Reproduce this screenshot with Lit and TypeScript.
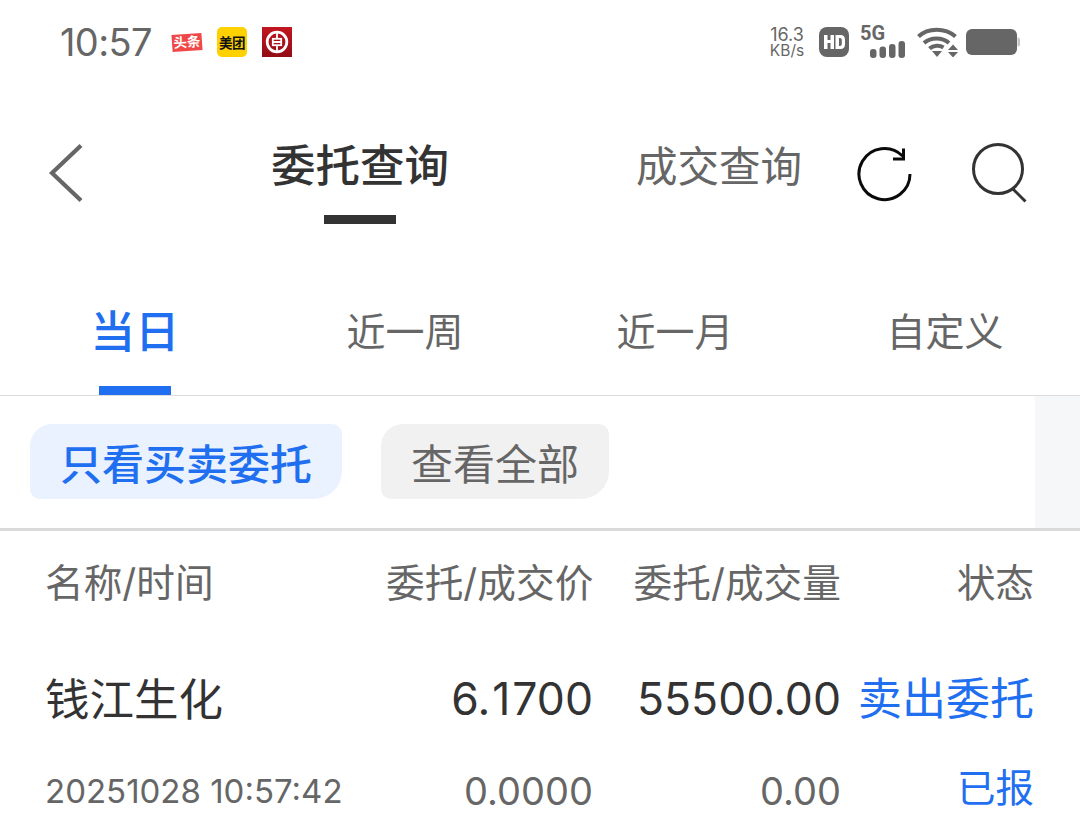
import { LitElement, html, css } from "lit";
import { customElement } from "lit/decorators.js";

@customElement("app-root")
export class AppRoot extends LitElement {
  static styles = css`
    :host { display: block; width: 1080px; height: 830px; overflow: hidden; background: #fff;
      font-family: "Inter", "Noto Sans CJK SC", sans-serif; color: #333; }
    svg { display: block; flex: none; }
    .status { height: 84px; display: flex; align-items: center; padding: 0 60px; }
    .time { font-size: 38px; color: #666; width: 112px; letter-spacing: -0.6px; }
    .logos { display: flex; gap: 15px; align-items: center; }
    .logo { width: 30px; height: 30px; display: flex; align-items: center; justify-content: center; }
    .toutiao { background: #f04848; height: 17px; color: #fff; font-size: 13.5px; font-weight: 700; transform: rotate(-4deg); white-space: nowrap; line-height: 1; overflow: hidden; }
    .meituan { background: #ffd100; border-radius: 5px; color: #111; font-size: 13.5px; font-weight: 700; white-space: nowrap; letter-spacing: -0.5px; }
    .boc { background: linear-gradient(#c1171f, #930d15); }
    .sysicons { margin-left: auto; display: flex; align-items: center; }
    .speed { width: 36px; margin: 2px 14px 0 0; text-align: center; color: #666; font-size: 15.5px; line-height: 16px; white-space: nowrap; }
    .speed::first-line { font-size: 18px; }
    .signal { position: relative; width: 46px; height: 32px; margin-left: 11px; }
    .g5 { position: absolute; left: 0; top: -4px; font-family: "Roboto", sans-serif; font-size: 20px; line-height: 22px; font-weight: 700; color: #666; }

    .nav { height: 140px; display: flex; padding-left: 48px; }
    .back { margin-top: 59px; }
    .nav-tab { display: flex; flex-direction: column; align-items: center; }
    .main-tab { width: 176px; margin-left: 188px; padding-top: 52px; font-size: 44.5px; font-weight: 500; line-height: 60px; color: #333; white-space: nowrap; }
    .main-tab i { display: block; width: 72px; height: 9px; background: #333; margin-top: 19px; }
    .sub-tab { margin-left: 188px; padding-top: 53px; font-size: 41.5px; line-height: 60px; color: #666; white-space: nowrap; }
    .refresh { margin: 62px 0 0 55px; }
    .search { margin: 59px 0 0 58px; }

    .periods { height: 172px; box-sizing: border-box; display: grid; grid-template-columns: repeat(4, 270px); border-bottom: 1px solid #dcdcdc; }
    .period { display: flex; flex-direction: column; align-items: center; padding-top: 82px; font-size: 39px; line-height: 52px; color: #666; white-space: nowrap; }
    .period.on { color: #1f6ff0; font-size: 44.5px; font-weight: 500; }
    .period i { display: block; width: 72px; height: 9px; background: #1f6ff0; margin-top: 28px; }

    .filters { height: 132px; display: flex; border-bottom: 3px solid #dadada; }
    .filters .rail { margin-left: auto; width: 45px; background: #f6f7f9; }
    .pill { height: 75px; margin-top: 28px; display: flex; align-items: center; justify-content: center; white-space: nowrap; border-radius: 22px 10px 28px 10px; }
    .pill.on { margin-left: 30px; width: 312px; background: #e9f2fe; color: #1f6ff0; font-weight: 500; font-size: 42px; }
    .pill.off { margin-left: 39px; width: 228px; background: #f1f1f1; color: #666; font-size: 42px; }

    .row { display: grid; grid-template-columns: 1fr 207px 248px 193px; padding: 0 46px 0 45px; align-items: center; white-space: nowrap; }
    .row > *:not(:first-child) { text-align: right; }
    .head { height: 98px; font-size: 38.7px; color: #666; }
    .line1 { height: 90px; font-size: 44.5px; color: #333; margin-top: 22px; }
    .line1 .num { font-size: 44.5px; margin-top: 5px; }
    .one { margin: 0 2px; }
    .line2 { height: 90px; font-size: 38px; color: #666; margin-top: 5px; }
    .line2 .date { font-size: 33px; }
    .blue { color: #1f6ff0; }
    .line1 .blue { font-size: 44px; }
    .line2 .blue { font-size: 38.5px; margin-bottom: 12px; }
  `;

  render() {
    return html`
      <div class="status">
        <div class="time">10:57</div>
        <div class="logos">
          <div class="logo toutiao">头条</div>
          <div class="logo meituan">美团</div>
          <div class="logo boc">
            <svg width="24" height="24" viewBox="0 0 24 24" fill="none" stroke="#fff">
              <circle cx="12" cy="12" r="9.800" stroke-width="2.800"/>
              <rect x="7.800" y="8.800" width="8.400" height="6.400" stroke-width="1.800"/>
              <path d="M12 3V8.800M12 15.200V21M8 12H16" stroke-width="1.800"/>
            </svg>
          </div>
        </div>
        <div class="sysicons">
          <div class="speed">16.3<br />KB/s</div>
          <svg width="30" height="30" viewBox="0 0 30 30">
            <rect width="30" height="30" rx="8" fill="#666"/>
            <path d="M5 8h3.500v5h3V8H15v14h-3.500v-6h-3v6H5z" fill="#fff"/>
            <path fill-rule="evenodd" d="M16.500 8h5c3 0 4.500 2 4.500 4.500v5c0 2.500-1.500 4.500-4.500 4.500h-5zM20 11v8h1c1 0 1.800-.7 1.800-2v-4c0-1.300-.8-2-1.800-2z" fill="#fff"/>
          </svg>
          <div class="signal">
            <div class="g5">5G</div>
            <svg width="46" height="32" viewBox="0 0 46 32" fill="#666">
              <rect x="10" y="23" width="6.500" height="9" rx="3"/>
              <rect x="19.500" y="20.500" width="6.500" height="11.500" rx="3"/>
              <rect x="29" y="18" width="6.500" height="14" rx="3"/>
              <rect x="38.500" y="15" width="6.500" height="17" rx="3"/>
            </svg>
          </div>
          <svg style="margin-left:11px" width="41" height="30" viewBox="0 0 41 30" fill="none" stroke="#666" stroke-width="4.200">
            <path d="M1.500 9.500C11 .500 28 .500 38.500 9.500"/>
            <path d="M7 16C14 10 25 10 32 16"/>
            <path d="M12.500 21.500C16.500 18 22.500 18 26.500 20.500"/>
            <path d="M15 24H25L20 30Z" fill="#666" stroke="none"/>
            <path d="M31 23h10l-5-5.500zM31 25h10l-5 5.500z" fill="#666" stroke="none"/>
          </svg>
          <svg style="margin-left:8px" width="54" height="26" viewBox="0 0 54 26" fill="#666">
            <rect width="51" height="26" rx="6"/>
            <path d="M51.500 8.500h.5a2 2 0 0 1 2 2v5a2 2 0 0 1-2 2h-.5z" fill="#c4c4c4"/>
          </svg>
        </div>
      </div>

      <div class="nav">
        <svg class="back" width="36" height="60" viewBox="0 0 36 60" fill="none" stroke="#666" stroke-width="4.200">
          <path d="M33 2.500L4 30L33 57.500"/>
        </svg>
        <div class="nav-tab main-tab">委托查询<i></i></div>
        <div class="sub-tab">成交查询</div>
        <svg class="refresh" width="56" height="56" viewBox="0 0 56 56" fill="none" stroke="#0a0a0a" stroke-width="3">
          <path d="M53 28A25.500 25.500 0 1 1 45.500 10"/>
          <path d="M46.500 2.500V13H36"/>
        </svg>
        <svg class="search" width="58" height="60" viewBox="0 0 58 60" fill="none" stroke="#333" stroke-width="3">
          <circle cx="27" cy="26" r="24.500"/>
          <path d="M42 46L54.500 58.500"/>
        </svg>
      </div>

      <div class="periods">
        <div class="period on">当日<i></i></div>
        <div class="period">近一周</div>
        <div class="period">近一月</div>
        <div class="period">自定义</div>
      </div>

      <div class="filters">
        <div class="pill on">只看买卖委托</div>
        <div class="pill off">查看全部</div>
        <div class="rail"></div>
      </div>

      <div class="row head">
        <div>名称/时间</div><div>委托/成交价</div><div>委托/成交量</div><div>状态</div>
      </div>
      <div class="row line1">
        <div>钱江生化</div><div class="num">6.<span class="one">1</span>700</div><div class="num">55500.00</div><div class="blue">卖出委托</div>
      </div>
      <div class="row line2">
        <div class="date">20251028 10:57:42</div><div>0.0000</div><div>0.00</div><div class="blue">已报</div>
      </div>
    `;
  }
}
